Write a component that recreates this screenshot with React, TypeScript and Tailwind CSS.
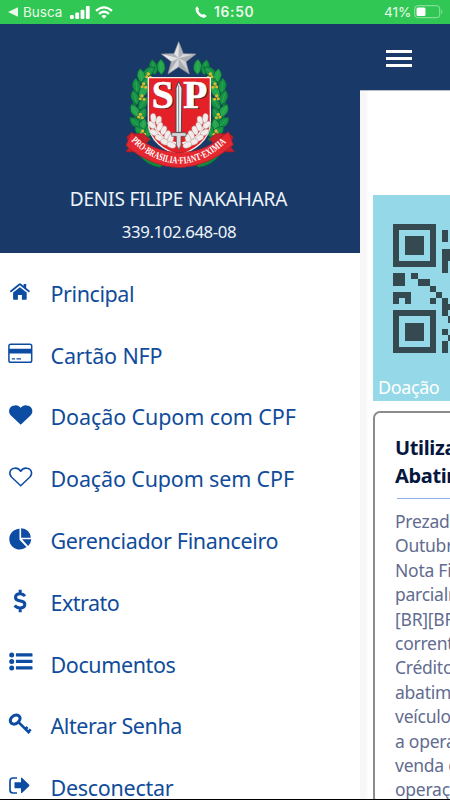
import React from "react";

const iconClass = "block h-6 w-6 overflow-visible";

const HomeIcon = () => (
  <svg className={iconClass} viewBox="0 0 24 24" fill="#0d4ca3">
    <path d="M11.9 6.2 18.7 11.6V18q0 .8-.8.8H13.9V14H9.900V18.800H5.900q-.8 0-.8-.8V11.600Z" />
    <path d="M11.9 2.300q.55 0 1.100.4L15.600 4.900V3.100H18.200V7L22 10 20.900 11.500 11.900 4.300 2.900 11.500 1.800 10 10.800 2.700q.5-.4 1.100-.4Z" />
  </svg>
);
const CardIcon = () => (
  <svg className={iconClass} viewBox="0 0 24 24">
    <rect x="0.9" y="1.300" width="22.800" height="18" rx="1.800" fill="none" stroke="#0d4ca3" strokeWidth="1.500" />
    <path d="M.9 5.700H23.700V10.400H.9ZM3.800 15.300H7V16.600H3.800ZM8.500 15.300H13V16.600H8.500Z" fill="#0d4ca3" />
  </svg>
);
const HeartIcon = ({ filled = false }: { filled?: boolean }) => (
  <svg className={iconClass} viewBox="0 0 24 24">
    <path
      d="M12.700 18.800 3.700 10.300C.1 6.600 2.100 1.600 6.400 1.200 9.400.8 11.600 2.300 12.700 4.300 13.800 2.300 16 .8 19 1.200 23.300 1.600 25.300 6.600 21.700 10.300Z"
      fill={filled ? "#0d4ca3" : "none"}
      stroke="#0d4ca3"
      strokeWidth="1.500"
      strokeLinejoin="round"
    />
  </svg>
);
const PieIcon = () => (
  <svg className={iconClass} viewBox="0 -1.5 24 24" fill="#0d4ca3">
    <path d="M11.500-1.700V9.300L18.500 16.600C11.800 22 1.300 17.700 1.300 8.400 1.300 3 6-1.500 11.500-1.700Z" />
    <path d="M13.100-2.200A9.500 9.500 0 0 1 22.800 7.200H13.100Z" />
    <path d="M14.100 8.700H23.300Q23 12.800 20.100 15.600Z" />
  </svg>
);
const DollarIcon = () => (
  <svg className={iconClass} viewBox="0 0 24 24" fill="none" stroke="#0d4ca3" strokeWidth="3">
    <path d="M17 6.200C15.500 4.200 13.800 3.600 11.900 3.700 6.300 3.900 6.300 9.700 10.500 10.500L13.600 11.200C18.600 12.500 17.500 18 12.200 18 9.800 18 8 17.100 6.700 15.500M12.200-.2V4.500M12.200 17V22.200" />
  </svg>
);
const ListIcon = () => (
  <svg className={iconClass} viewBox="0 0 24 24" fill="#0d4ca3">
    {[2.900, 9.400, 15.900].map((y) => (
      <g key={y}>
        <circle cx="3.700" cy={y} r="2.500" />
        <rect x="7.900" y={y - 1.600} width="16.600" height="3.200" rx=".6" />
      </g>
    ))}
  </svg>
);
const KeyIcon = () => (
  <svg className={iconClass} viewBox="0 0 24 24" fill="none" stroke="#0d4ca3">
    <path d="M3.900 3.100C6.600-.1 11.200.5 12.100 3.900 12.500 6 9.500 9.700 6.800 10.100 2.300 10.500.9 6.500 3.900 3.100Z" strokeWidth="3" />
    <path d="M10.200 7.900 21.500 19.100M17.100 15.500 19.500 13M20 18.100 22.700 15.400" strokeWidth="2.700" />
  </svg>
);
const ExitIcon = () => (
  <svg className={iconClass} viewBox="0 0 24 24">
    <path d="M9 2H5Q2 2 2 5V14Q2 17 5 17H9" fill="none" stroke="#0d4ca3" strokeWidth="1.700" />
    <path d="M6.500 6.300H13V2.300Q13 1 14.200 2L21 8.400Q21.900 9.300 21 10.200L14.200 16.700Q13 17.600 13 16.200V12.300H6.500Z" fill="#0d4ca3" />
  </svg>
);

const items = [
  { label: "Principal", icon: <HomeIcon />, spacing: "tracking-[-0.42px]" },
  { label: "Cartão NFP", icon: <CardIcon />, spacing: "tracking-[-0.15px]" },
  { label: "Doação Cupom com CPF", icon: <HeartIcon filled />, spacing: "tracking-[-0.1px]" },
  { label: "Doação Cupom sem CPF", icon: <HeartIcon />, spacing: "tracking-[-0.15px]" },
  { label: "Gerenciador Financeiro", icon: <PieIcon />, spacing: "tracking-[-0.33px]" },
  { label: "Extrato", icon: <DollarIcon />, spacing: "tracking-[-0.5px]" },
  { label: "Documentos", icon: <ListIcon />, spacing: "tracking-[-0.4px]" },
  { label: "Alterar Senha", icon: <KeyIcon />, spacing: "tracking-[-0.4px]" },
  { label: "Desconectar", icon: <ExitIcon />, spacing: "tracking-[-0.28px]" },
];

function StatusBar() {
  return (
    <header className="flex h-6 shrink-0 items-center bg-[#30c755] font-[Inter,sans-serif] text-[#e9f9e9]">
      <div className="flex w-[195px] items-center pl-2">
        <svg className="h-[10px] w-[10px]" viewBox="0 0 10 10" fill="currentColor"><path d="M0 5 10 .3V9.700Z" /></svg>
        <span className="ml-[5px] w-[42px] text-[13.500px] leading-6">Busca</span>
        <svg className="ml-[5px] h-[13px] w-5" viewBox="0 0 20 13" fill="white">
          <rect y="9" width="3.800" height="4" rx="1" /><rect x="5.300" y="6.500" width="3.800" height="6.500" rx="1" />
          <rect x="10.600" y="3.700" width="3.800" height="9.300" rx="1" /><rect x="15.900" width="3.800" height="13" rx="1" />
        </svg>
        <svg className="ml-[5px] h-[13px] w-[18px]" viewBox="0 0 18 13" fill="none" stroke="white" strokeWidth="2.300">
          <path d="M1 4.900Q9-2.100 17 4.900M4 7.900Q9 3.600 14 7.900" /><path d="M6.300 10Q9 7.800 11.700 10L9 12.700Z" fill="white" stroke="none" />
        </svg>
      </div>
      <svg className="h-3 w-3" viewBox="0 0 12 12" fill="white"><path d="M2.300.6 4 3.300Q4.200 3.800 3.300 4.700 4.500 7.300 7.300 8.700L8.500 7.900Q9 7.700 11.600 9.700 11.800 10.200 10.800 11.100C7.500 14.100-1.600 6.200 1 1.300Q1.700.2 2.300.6Z" /></svg>
      <span className="ml-[7px] w-[170px] text-[13.800px] font-semibold leading-6 tracking-[0.7px]">16:50</span>
      <span className="w-[28px] text-[13.600px] leading-6 tracking-[-0.05px]">41%</span>
      <svg className="ml-[2px] h-[14px] w-[30px]" viewBox="0 0 30 14">
        <rect x=".7" y=".7" width="25" height="12" rx="3" fill="none" stroke="#97e3a8" strokeWidth="1" />
        <rect x="2.500" y="2.500" width="9" height="8.500" rx="1.500" fill="white" /><path d="M27.300 4.500Q29.500 6.800 27.300 9" fill="#97e3a8" />
      </svg>
    </header>
  );
}

const leaves = [
  [153, 95, 0], [130, 96, -10], [116, 110, 55], [94, 123, -10], [114, 137, 65],
  [79, 152, -5], [100, 168, 35], [75, 187, -15], [99, 205, 35], [75, 228, -30],
  [97, 238, 25], [76, 263, -45], [99, 272, 15], [91, 290, -45], [116, 286, 20],
];

function StateCrest() {
  return (
    <svg className="block h-[140px] w-[140px]" viewBox="0 0 420 420">
      <defs>
        <linearGradient id="star" x2="1" y2="1"><stop stopColor="#fff" /><stop offset="1" stopColor="#b9bbc0" /></linearGradient>
        <path id="motto" d="M63 317Q130 385 209 386 288 385 358 313" />
      </defs>
      {[false, true].map((mirror) => (
        <g key={String(mirror)} transform={mirror ? "translate(416 0) scale(-1 1)" : undefined}>
          <path d="M146 94Q80 116 73 200 70 268 120 316" fill="none" stroke="#147b3d" strokeWidth="9" />
          {leaves.map(([x, y, r], i) => (
            <g key={i} transform={`translate(${x} ${y}) rotate(${r})`}>
              <path d="M0-23Q15-8 12 8 9 19 0 24-13 11-12-4-10-15 0-23Z" fill={i % 3 ? "#169247" : "#23a54d"} stroke="#0b5e39" strokeWidth="2" />
              <path d="M0-13V16" stroke="#4cb761" strokeWidth="1.500" />
            </g>
          ))}
          {[[101, 151], [96, 187], [91, 242], [98, 292], [115, 121]].map(([x, y]) => (
            <g key={y} fill="#dcb92f"><circle cx={x} cy={y - 4} r="5" /><circle cx={x - 5} cy={y + 4} r="4.500" /><circle cx={x + 6} cy={y + 6} r="4.500" /></g>
          ))}
          <path d="M85 358Q130 376 175 377L150 397Q111 392 85 358Z" fill="#118b3d" stroke="#0a6536" strokeWidth="2" />
        </g>
      ))}
      <path d="M115 128H301V260C301 318 249 347 208 360 165 347 115 318 115 260Z" fill="#e42128" stroke="#f9eee4" strokeWidth="4" />
      <path d="M206 20 220 56 258 57 228 80 238 117 206 96 174 117 184 80 154 57 192 56Z" fill="url(#star)" stroke="#8b8e96" strokeWidth="2" />
      <path d="M206 20 206 70 220 56ZM258 57 206 70 228 80ZM238 117 206 70 206 96ZM174 117 206 70 184 80ZM154 57 206 70 192 56Z" fill="#92949b" opacity=".6" />
      <g fontFamily="Liberation Serif, serif" fontWeight="bold" fontSize="118" textAnchor="middle">
        <g fill="#5e2020"><text x="162" y="223">S</text><text x="260" y="223">P</text></g>
        <g fill="#fff" stroke="#fff" strokeWidth="2"><text x="158" y="220">S</text><text x="256" y="220">P</text></g>
      </g>
      {[false, true].map((mirror) => (
        <g key={String(mirror)} transform={mirror ? "translate(416 0) scale(-1 1)" : undefined} fill="#f4ecea" stroke="#a88c8e" strokeWidth="1.200">
          <path d="M130 253Q137 310 199 325" fill="none" stroke="#fff" strokeWidth="6" />
          {[[130, 249, -8], [146, 257, 12], [125, 270, -45], [149, 275, 20], [132, 293, -60], [161, 286, 20], [148, 309, -65], [172, 300, 20], [165, 321, -70], [182, 311, 15], [184, 330, -70]].map(([x, y, r]) => (
            <ellipse key={`${x}-${y}`} cx={x} cy={y} rx="8.500" ry="14" transform={`rotate(${r} ${x} ${y})`} />
          ))}
        </g>
      ))}
      <path d="M206 140 216 159 214 292H198V159Z" fill="#eee" stroke="#44464c" strokeWidth="3" />
      <path d="M206 151V291" stroke="#84868c" strokeWidth="3" />
      <path d="M185 293H228V304H213V330L207 344 199 330V304H185Z" fill="#d9d9dc" stroke="#4d4e54" strokeWidth="2" />
      <path d="M61 296H101L119 313 89 350 48 351 60 330 50 306ZM358 296H317L299 313 331 350 374 351 358 330 370 306Z" fill="#c9202a" stroke="#8f2029" strokeWidth="2" />
      <path d="M64 292Q127 352 209 353 291 352 355 290L370 329Q297 394 209 398 123 396 48 332Z" fill="#e52830" stroke="#9e2029" strokeWidth="2" />
      <text fontFamily="Liberation Serif, serif" fontSize="30" fontWeight="bold" fill="#fff" textLength="324" lengthAdjust="spacingAndGlyphs"><textPath href="#motto" textLength="324" lengthAdjust="spacingAndGlyphs">PRO·BRASILIA·FIANT·EXIMIA</textPath></text>
    </svg>
  );
}

const modules = [
  [0, 8, 2, 2], [3, 8, 1, 1], [4, 9, 2, 1], [6, 10, 1, 1], [0, 11, 3, 1], [0, 12, 1, 1], [2, 12, 1, 1],
  [7, 11, 1, 1], [6, 12, 1, 1], [8, 1, 1, 2], [8, 4, 2, 2], [8, 6, 1, 2], [8, 12, 1, 3],
  [9, 13, 1, 1], [9, 15, 1, 1], [8, 17, 1, 1], [9, 18, 1, 1], [8, 19, 1, 2],
];

function DonationTile() {
  return (
    <div className="mt-[104px] flex h-[206px] shrink-0 flex-col bg-[#95d8e7] pt-[29px]">
      <svg className="ml-[20px] block h-[130px] w-[57px]" viewBox="0 0 9.25 21.1" preserveAspectRatio="xMinYMin meet" fill="#344950" shapeRendering="crispEdges">
        {[0, 14].map((y) => (
          <path key={y} d={`M0 ${y}h7v7H0ZM1 ${y + 1}v5h5v-5ZM2 ${y + 2}h3v3H2Z`} fillRule="evenodd" />
        ))}
        {modules.map(([x, y, w, h]) => <rect key={`${x}-${y}`} x={x} y={y} width={w} height={h} />)}
      </svg>
      <span className="ml-[5px] mt-[19px] text-[18px] leading-7 tracking-[-0.4px] text-white">Doação</span>
    </div>
  );
}

const notice = ["Prezado", "Outubro", "Nota Fis", "parcialm", "[BR][BR]", "corrente", "Créditos", "abatime", "veículos", "a operaç", "venda e", "operaçã"];

export default function App() {
  return (
    <div className="flex h-[800px] w-[450px] flex-col overflow-hidden border-b border-black bg-white font-['Noto_Sans','Open_Sans',sans-serif]">
      <StatusBar />
      <div className="flex min-h-0 flex-1">
        <aside className="flex w-[360px] shrink-0 flex-col overflow-hidden bg-white">
          <div className="flex h-[229px] shrink-0 flex-col items-center bg-[#193a68] pt-[11px] text-[#edf3fa]">
            <StateCrest />
            <h1 className="mt-[10px] whitespace-nowrap pr-[3px] text-[19px] leading-7 tracking-[-0.17px]">DENIS FILIPE NAKAHARA</h1>
            <p className="mt-[7px] pr-[2px] text-[16.800px] leading-6 tracking-[-0.4px]">339.102.648-08</p>
          </div>
          <nav className="flex flex-col pt-[10px] text-[#104c9b]">
            {items.map(({ label, icon, spacing }) => (
              <a key={label} href="#" className="flex h-[61.800px] shrink-0 items-center pl-2">
                <span className="mb-[1px] w-[42.500px]">{icon}</span>
                <span className={`whitespace-nowrap text-[21.500px] leading-8 ${spacing}`}>{label}</span>
              </a>
            ))}
          </nav>
        </aside>
        <main className="flex w-[90px] flex-col overflow-hidden">
          <div className="flex h-[66px] shrink-0 flex-col gap-1 bg-[#193a68] pl-[26px] pt-[26px]">
            <span className="h-[3px] w-[26px] bg-white" />
            <span className="h-[3px] w-[26px] bg-white" />
            <span className="h-[3px] w-[26px] bg-white" />
          </div>
          <div className="flex min-h-0 flex-1 flex-col border-t border-[#b7bdc7] bg-linear-to-r from-[#f7f7f8] from-[5px] to-white to-[9px] pl-[13px]">
            <DonationTile />
            <article className="mt-[10px] h-[460px] w-[180px] rounded-[7px] border-2 border-[#8c8c8e] bg-white pl-5 pt-[21px]">
              <h2 className="whitespace-nowrap text-[20px] font-bold leading-7 tracking-[-0.35px] text-[#05163f]">Utilização<br />Abatimento</h2>
              <div className="mb-[10px] ml-[2px] mt-[8px] h-px bg-[#8fb0e4]" />
              <p className="whitespace-nowrap text-[17.500px] leading-[24.400px] tracking-[-0.25px] text-[#626c90]">
                {notice.map((line) => <React.Fragment key={line}>{line}<br /></React.Fragment>)}
              </p>
            </article>
          </div>
        </main>
      </div>
    </div>
  );
}
